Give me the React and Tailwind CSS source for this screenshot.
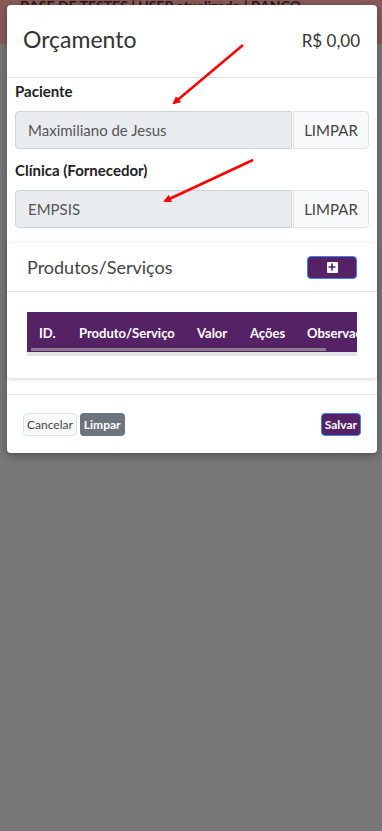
import { Plus } from "lucide-react";

const font = { fontFamily: "'Source Sans Pro', Lato, 'Open Sans', sans-serif" };

function Field({ label, value, top }) {
	return (
		<div className={top}>
			<p className="text-[15px] font-bold text-[#222] leading-[24px] mb-2">{label}</p>
			<div className="flex h-[38px]">
				<div className="flex-1 flex items-center px-3 bg-[#e9ecef] border border-[#ced4da] rounded-l text-[15px] text-[#555]">
					{value}
				</div>
				<button className="w-[76px] ml-[1px] bg-[#f8f9fa] border border-[#dee2e6] rounded-r text-[15px] text-[#444]">
					LIMPAR
				</button>
			</div>
		</div>
	);
}

export default function App() {
	const cols = ["ID.", "Produto/Serviço", "Valor", "Ações", "Observações"];
	return (
		<div className="min-h-screen bg-[#777777] relative" style={font}>
			{/* page behind the overlay */}
			<div className="absolute top-0 left-0 right-0 h-[44px] bg-[#8a5a5a] pl-5 text-[14px] font-bold text-[#2a1818] leading-[12px] whitespace-nowrap">
				BASE DE TESTES | USER atualizado | BANCO
			</div>

			<div className="relative pt-[5px] pl-[7px] pr-[5px]">
				<div className="bg-white rounded shadow-[0_2px_8px_rgba(0,0,0,0.35)] relative">
					<div className="h-[73px] flex items-center justify-between pl-4 pr-[17px] border-b border-[#dee2e6]">
						<h1 className="text-[23px] text-[#333] pb-1">Orçamento</h1>
						<span className="text-[17px] text-[#333]">R$ 0,00</span>
					</div>

					<div className="px-2 pt-[1px]">
						<Field label="Paciente" value="Maximiliano de Jesus" />
						<Field label="Clínica (Fornecedor)" value="EMPSIS" top="mt-[9px]" />
					</div>

					<div className="mt-[15px] rounded shadow-[0_1px_4px_rgba(0,0,0,0.18)]">
						<div className="h-[49px] flex items-center justify-between pl-5 pr-5 border-b border-[#dee2e6]">
							<span className="text-[18px] text-[#444]">Produtos/Serviços</span>
							<button className="w-[50px] h-[23px] bg-[#552266] border border-[#3b82f6] rounded-sm flex items-center justify-center">
								<span className="w-[11px] h-[11px] bg-white rounded-[1px] flex items-center justify-center">
									<Plus size={10} strokeWidth={4} color="#552266" />
								</span>
							</button>
						</div>
						<div className="px-5 pt-[20px] pb-[22px]">
							<div className="overflow-hidden border-b-4 border-[#e4e4e8]">
								<div className="relative h-[40px] pt-[4px] bg-[#552266] flex items-center text-[13px] font-bold text-white whitespace-nowrap">
									<span className="ml-3 w-[40px] shrink-0">{cols[0]}</span>
									<span className="w-[118px] shrink-0">{cols[1]}</span>
									<span className="w-[53px] shrink-0">{cols[2]}</span>
									<span className="w-[57px] shrink-0">{cols[3]}</span>
									<span className="shrink-0">{cols[4]}</span>
									<div className="absolute left-1 bottom-[1px] w-[295px] h-[3px] bg-[#8a7a92]" />
								</div>
							</div>
						</div>
					</div>

					<div className="mt-4 border-t border-[#dee2e6] flex items-center justify-between pl-4 pr-4 pt-[18px] pb-[17px]">
						<div className="flex gap-[3px]">
							<button className="h-[23px] px-[3px] bg-[#f8f9fa] border border-[#dee2e6] rounded-sm text-[12px] text-[#444]">
								Cancelar
							</button>
							<button className="h-[23px] px-[4px] bg-[#6c757d] rounded-sm text-[12px] font-bold text-white">
								Limpar
							</button>
						</div>
						<button className="h-[23px] px-[3px] bg-[#552266] border border-[#3b82f6] rounded-sm text-[12px] font-bold text-white">
							Salvar
						</button>
					</div>

					{/* annotation arrows */}
					<svg className="absolute inset-0 pointer-events-none" width="370" height="448" viewBox="0 0 370 448">
						<defs>
							<marker id="ah" markerWidth="8" markerHeight="8" refX="6" refY="4" orient="auto" markerUnits="userSpaceOnUse">
								<path d="M0 0 L8 4 L0 8 Z" fill="#ff0000" />
							</marker>
						</defs>
						<line x1="236" y1="40" x2="167" y2="98" stroke="#ff0000" strokeWidth="2.5" markerEnd="url(#ah)" />
						<line x1="246" y1="155" x2="158" y2="196" stroke="#ff0000" strokeWidth="2.5" markerEnd="url(#ah)" />
					</svg>
				</div>
			</div>
		</div>
	);
}
